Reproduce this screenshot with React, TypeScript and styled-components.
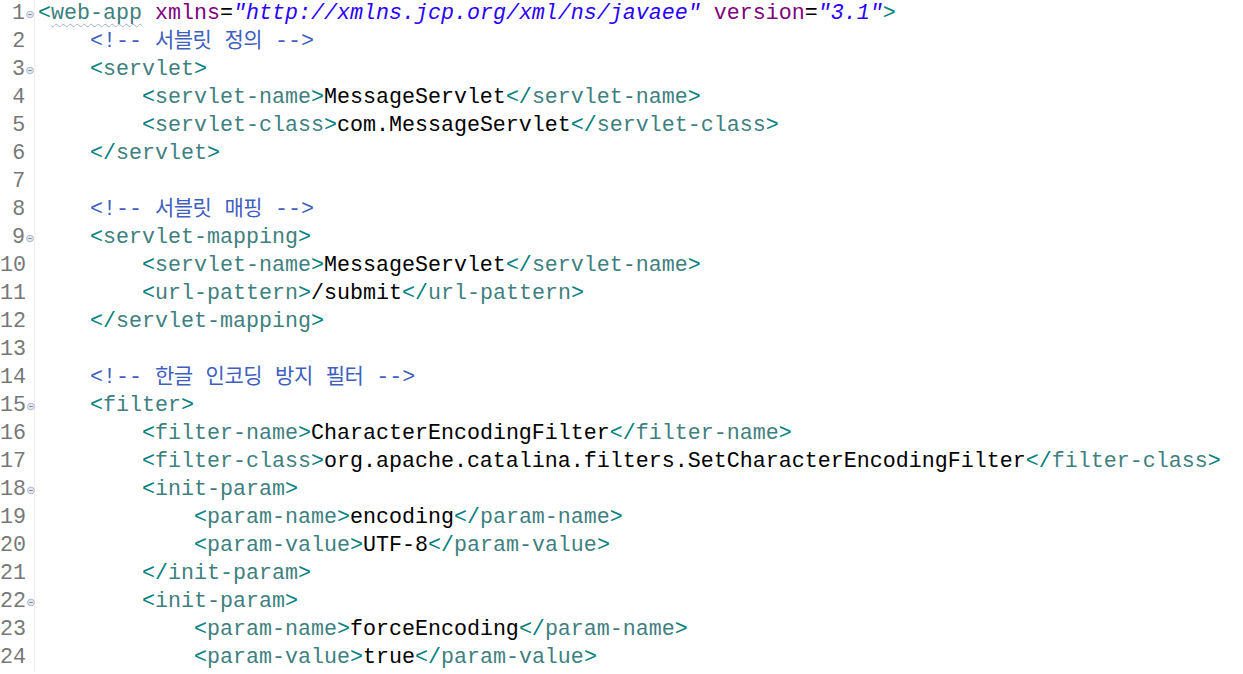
import React from 'react';
import styled, { createGlobalStyle, css } from 'styled-components';

type Kind = 'bracket' | 'tag' | 'attr' | 'value' | 'comment' | 'text' | 'plain';

interface Token {
  kind: Kind;
  text: string;
  squiggle?: boolean;
}

const SOURCE: string[] = [
  '<web-app xmlns="http://xmlns.jcp.org/xml/ns/javaee" version="3.1">',
  '    <!-- 서블릿 정의 -->',
  '    <servlet>',
  '        <servlet-name>MessageServlet</servlet-name>',
  '        <servlet-class>com.MessageServlet</servlet-class>',
  '    </servlet>',
  '',
  '    <!-- 서블릿 매핑 -->',
  '    <servlet-mapping>',
  '        <servlet-name>MessageServlet</servlet-name>',
  '        <url-pattern>/submit</url-pattern>',
  '    </servlet-mapping>',
  '',
  '    <!-- 한글 인코딩 방지 필터 -->',
  '    <filter>',
  '        <filter-name>CharacterEncodingFilter</filter-name>',
  '        <filter-class>org.apache.catalina.filters.SetCharacterEncodingFilter</filter-class>',
  '        <init-param>',
  '            <param-name>encoding</param-name>',
  '            <param-value>UTF-8</param-value>',
  '        </init-param>',
  '        <init-param>',
  '            <param-name>forceEncoding</param-name>',
  '            <param-value>true</param-value>',
];

const FOLDABLE = new Set([1, 3, 9, 15, 18, 22]);

const ATTR_RE = /^(\s+)([\w:]+)(=)("[^"]*")/;

function tokenize (line: string): Token[] {
  const out: Token[] = [];
  let i = 0;

  while (i < line.length) {
    if (line.startsWith('<!--', i)) {
      const end = line.indexOf('-->', i) + 3;

      out.push({ kind: 'comment', text: line.slice(i, end) });
      i = end;
    } else if (line[i] === '<') {
      const open = line[i + 1] === '/' ? '</' : '<';

      out.push({ kind: 'bracket', text: open });
      i += open.length;

      const name = /^[\w-]+/.exec(line.slice(i))?.[0] ?? '';

      out.push({ kind: 'tag', text: name, squiggle: name === 'web-app' });
      i += name.length;

      let attr = ATTR_RE.exec(line.slice(i));

      while (attr) {
        out.push({ kind: 'plain', text: attr[1] });
        out.push({ kind: 'attr', text: attr[2] });
        out.push({ kind: 'plain', text: attr[3] });
        out.push({ kind: 'value', text: attr[4] });
        i += attr[0].length;
        attr = ATTR_RE.exec(line.slice(i));
      }

      if (line[i] === '>') {
        out.push({ kind: 'bracket', text: '>' });
        i += 1;
      }
    } else {
      const next = line.indexOf('<', i);
      const end = next === -1 ? line.length : next;

      out.push({ kind: 'text', text: line.slice(i, end) });
      i = end;
    }
  }

  return out;
}

const GlobalStyle = createGlobalStyle`
  html, body {
    margin: 0;
    padding: 0;
    background: #ffffff;
  }
`;

const Editor = styled.div`
  display: flex;
  flex-direction: column;
  width: 1243px;
  height: 674px;
  overflow: hidden;
  background: #ffffff;
  font-family: "Liberation Mono", "DejaVu Sans Mono", monospace;
  font-size: 21.67px;
`;

const Row = styled.div`
  display: flex;
  height: 28px;
  line-height: 28px;
`;

const Gutter = styled.div`
  display: flex;
  align-items: center;
  width: 34px;
  flex: none;
  border-right: 1px solid #f0f0f0;
`;

const LineNo = styled.span`
  width: 26px;
  text-align: right;
  color: #787878;
`;

const FoldSlot = styled.span`
  display: flex;
  align-items: center;
  justify-content: center;
  width: 8px;
  height: 28px;
  padding-left: 1px;
`;

const Code = styled.div`
  flex: 1;
  padding-left: 3px;
  white-space: pre;
`;

const COLORS: Record<Kind, string> = {
  bracket: '#008080',
  tag: '#3f7f7f',
  attr: '#7f007f',
  value: '#2a00ff',
  comment: '#3f5fbf',
  text: '#000000',
  plain: '#000000',
};

const Tok = styled.span<{ $kind: Kind; $squiggle?: boolean }>`
  color: ${(p) => COLORS[p.$kind]};
  ${(p) => p.$kind === 'value' && css`font-style: italic;`}
  ${(p) => p.$squiggle && css`
    text-decoration: underline wavy #a3afcc;
    text-decoration-thickness: 1px;
    text-underline-offset: 4px;
  `}
`;

const Hangul = styled.span`
  font-family: "Noto Sans CJK KR", sans-serif;
  font-size: 21px;
  line-height: 1;
  letter-spacing: -0.5px;
`;

function splitHangul (text: string): React.ReactNode[] {
  return text.split(/([\uac00-\ud7a3]+)/).map((part, index) =>
    /[\uac00-\ud7a3]/.test(part)
      ? <Hangul key={index}>{part}</Hangul>
      : part
  );
}

function FoldIcon (): React.ReactElement {
  return (
    <svg width='9' height='9' viewBox='0 0 9 9'>
      <circle cx='4.5' cy='4.5' r='3.8' fill='#e4e9f1' stroke='#9eabbd' strokeWidth='0.9' />
      <line x1='2.6' y1='4.5' x2='6.4' y2='4.5' stroke='#6d7b90' strokeWidth='1' />
    </svg>
  );
}

function CodeLine ({ line, number }: { line: string; number: number }): React.ReactElement {
  return (
    <Row>
      <Gutter>
        <LineNo>{number}</LineNo>
        <FoldSlot>{FOLDABLE.has(number) ? <FoldIcon /> : null}</FoldSlot>
      </Gutter>
      <Code>
        {tokenize(line).map((tok, index) => (
          <Tok
            $kind={tok.kind}
            $squiggle={tok.squiggle}
            key={`tok:${index}`}
          >
            {tok.kind === 'comment' ? splitHangul(tok.text) : tok.text}
          </Tok>
        ))}
        {line === '' ? ' ' : null}
      </Code>
    </Row>
  );
}

export default function App (): React.ReactElement {
  return (
    <>
      <GlobalStyle />
      <Editor>
        {SOURCE.map((line, index) => (
          <CodeLine
            key={`line:${index}`}
            line={line}
            number={index + 1}
          />
        ))}
      </Editor>
    </>
  );
}
